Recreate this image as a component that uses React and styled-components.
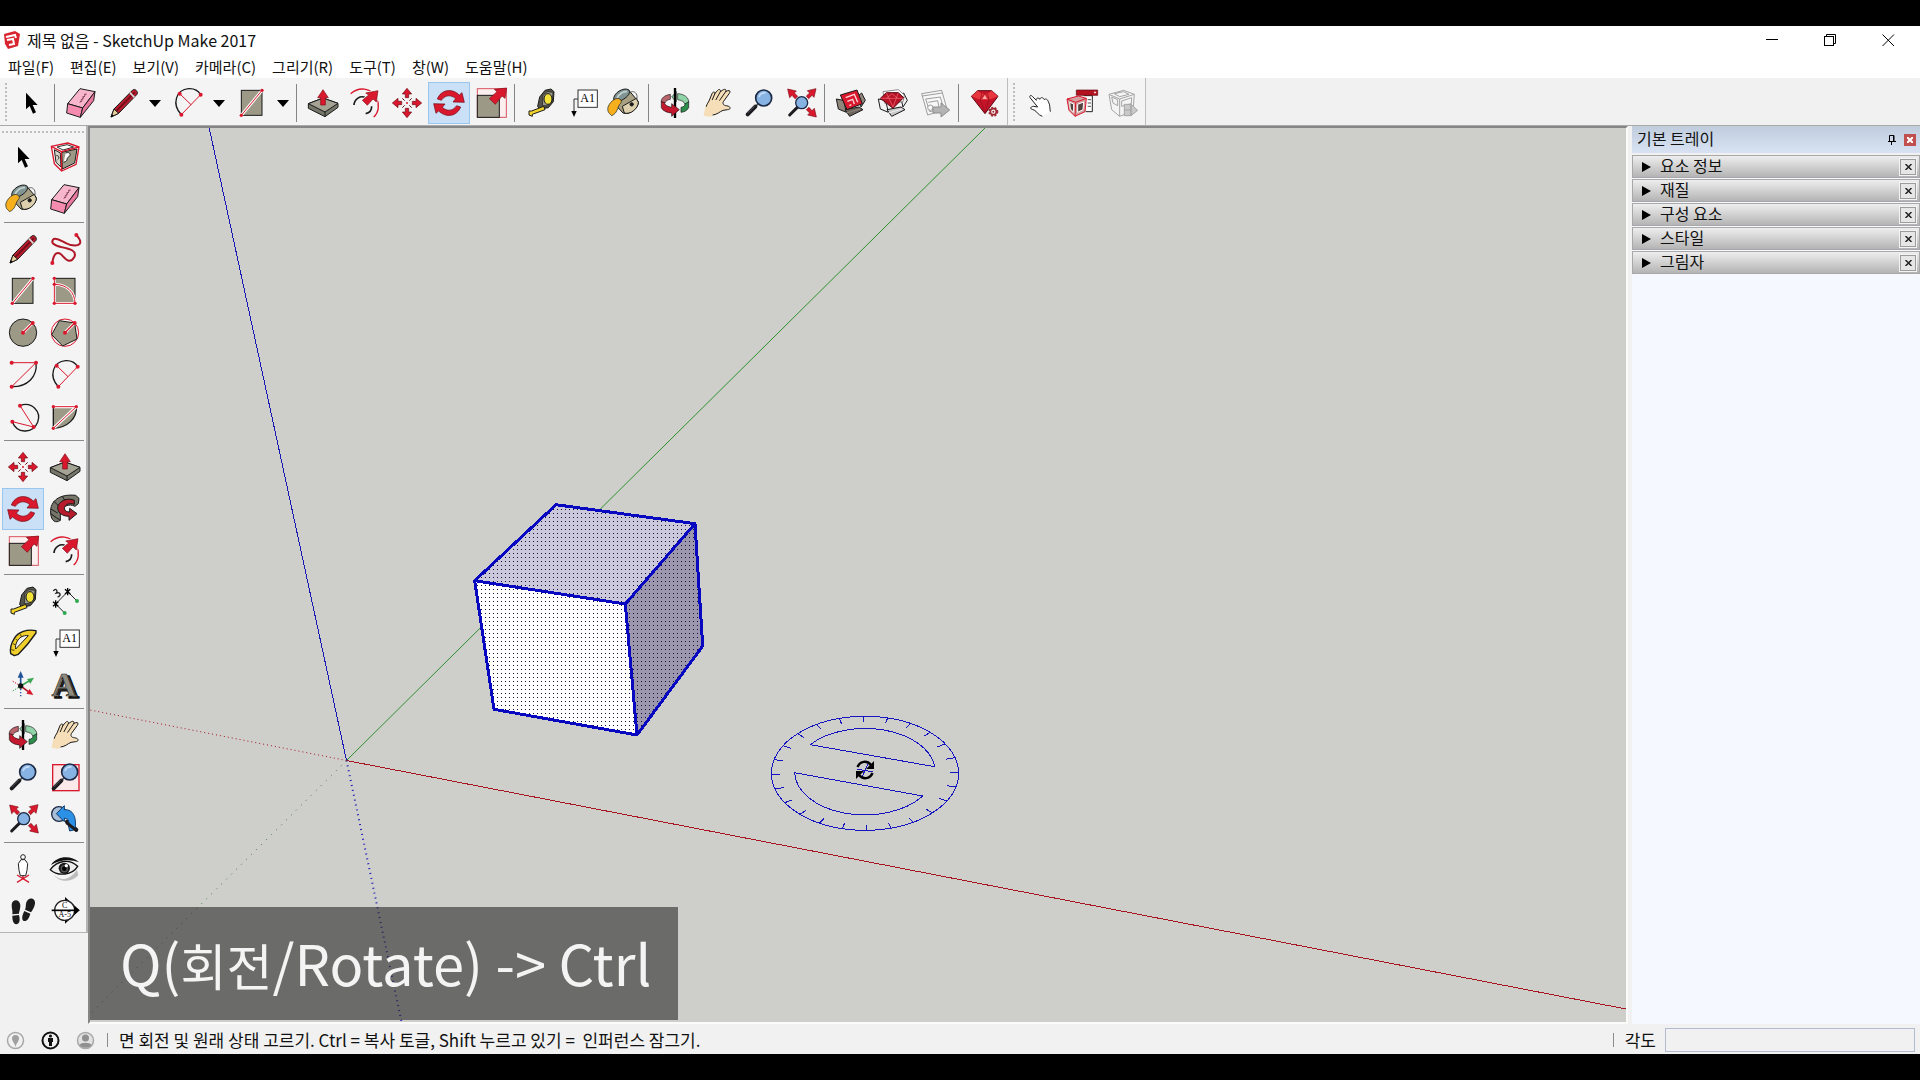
import React from "react";
import styled, { createGlobalStyle } from "styled-components";

const UI_FONT = '"Noto Sans CJK KR", "Noto Sans", sans-serif';
const RED = "#d9182d";
const KHAKI = "#9c9a86";
const INK = "#1a1a1a";

const GlobalStyle = createGlobalStyle`
  *, *::before, *::after { box-sizing: border-box; }
  body { margin: 0; background: #000; }
  button, input { font: inherit; color: inherit; }
`;

const Frame = styled.div`
  min-height: 100vh;
  display: flex;
  flex-direction: column;
  padding: 26px 0;
  background: #000;
  color: #111;
  font-family: ${UI_FONT};
  font-size: 15px;
  line-height: 20px;
`;

const TitleBar = styled.header`
  display: flex;
  align-items: center;
  height: 28px;
  padding: 0 3px 0 3px;
  gap: 6px;
  background: #fff;
`;

const Title = styled.h1`
  flex: 1;
  margin: 0;
  padding-bottom: 1px;
  font-size: 16px;
  line-height: 20px;
  font-weight: 400;
`;

const Logo = styled.svg`
  width: 18px;
  height: 20px;
`;

const WindowControls = styled.div`
  display: flex;
`;

const WindowButton = styled.button`
  display: flex;
  align-items: center;
  justify-content: center;
  width: 58px;
  height: 28px;
  padding: 0;
  border: 0;
  background: none;
`;

const MenuBar = styled.nav`
  display: flex;
  height: 24px;
  background: #fff;
`;

const MenuButton = styled.button`
  padding: 2px 8px 0;
  border: 0;
  background: none;
  line-height: 20px;
  white-space: nowrap;
`;

const ToolStrip = styled.div`
  display: flex;
  height: 48px;
  background: #f1f1f1;
  border-bottom: 1px solid #a9a9a9;
`;

const ToolGroup = styled.div`
  display: flex;
  align-items: center;
  padding: 3px 1px 0 5px;
  background: #f4f4f4;
  border-right: 1px solid #bdbdbd;
`;

const Grip = styled.span`
  width: ${(p) => (p.$wide ? "auto" : "2px")};
  height: ${(p) => (p.$wide ? "2px" : "40px")};
  margin: ${(p) => (p.$wide ? "5px 2px 3px" : "0 3px 0 0")};
  background: repeating-linear-gradient(
    ${(p) => (p.$wide ? "to right" : "to bottom")},
    #bdbdbd 0 2px,
    transparent 2px 4px
  );
`;

const ToolButton = styled.button`
  display: flex;
  align-items: center;
  justify-content: center;
  width: ${(p) => (p.$split ? "44px" : "42px")};
  height: 42px;
  padding: 0;
  border: 1px solid ${(p) => (p.$active ? "#98c6f0" : "transparent")};
  background: ${(p) => (p.$active ? "#c9e0f7" : "transparent")};
`;

const DropButton = styled.button`
  display: flex;
  align-items: center;
  justify-content: center;
  width: 20px;
  height: 42px;
  padding: 0 2px 0 0;
  border: 0;
  background: none;
`;

const StripRule = styled.span`
  width: 1px;
  height: 38px;
  margin: 0 5px 0 2px;
  background: #858585;
`;

const Glyph = styled.svg`
  width: 32px;
  height: 32px;
  overflow: visible;
  flex: none;
`;

const Workspace = styled.div`
  flex: 1;
  display: flex;
  background: #f1f1f1;
`;

const SidePalette = styled.aside`
  display: flex;
  flex-direction: column;
  align-self: flex-start;
  width: 88px;
  background: #f4f4f4;
  border-right: 2px solid #b4b4b4;
  border-bottom: 1px solid #b4b4b4;
`;

const PaletteBlock = styled.div`
  display: grid;
  grid-template-columns: 42px 42px;
  padding-left: 2px;
`;

const PaletteRule = styled.span`
  height: 1px;
  margin: 2px 2px 5px 4px;
  background: #8a8a8a;
`;

const Canvas = styled.main`
  flex: 1;
  position: relative;
  overflow: hidden;
  background: #cececa;
  border: 2px solid #858585;
  border-right-color: #fbfbfb;
  border-bottom-color: #fbfbfb;
`;

const Scene = styled.svg`
  position: absolute;
  inset: 0;
  width: 100%;
  height: 100%;
`;

const Caption = styled.p`
  position: absolute;
  left: 0;
  bottom: 2px;
  margin: 0;
  padding: 0 30px;
  width: 588px;
  height: 113px;
  background: rgba(42, 42, 42, 0.6);
  color: #f4f4f4;
  font-size: 56px;
  line-height: 110px;
  white-space: nowrap;
`;

const CaptionHangul = styled.span`
  font-size: 50px;
`;

const Tray = styled.aside`
  width: 292px;
  display: flex;
  flex-direction: column;
  padding-left: 4px;
  font-size: 16px;
`;

const TrayHeader = styled.header`
  display: flex;
  align-items: center;
  height: 27px;
  margin-bottom: 2px;
  padding: 0 4px 0 5px;
  gap: 6px;
  background: linear-gradient(#c0cddd, #d8e2f3);
`;

const TrayTitle = styled.h2`
  flex: 1;
  margin: 0;
  padding-bottom: 3px;
  font-size: 16px;
  line-height: 20px;
  font-weight: 400;
`;

const HeaderButton = styled.button`
  display: flex;
  align-items: center;
  justify-content: center;
  width: 12px;
  height: 12px;
  padding: 0;
  border: 0;
  background: ${(p) => (p.$danger ? "#c0504f" : "none")};
`;

const TrayBody = styled.div`
  flex: 1;
  display: flex;
  flex-direction: column;
  gap: 1px;
  background: #f5f8ff;
`;

const Section = styled.section`
  display: flex;
  align-items: center;
  height: 23px;
  padding: 0 3px 0 0;
  border: 1px solid #a8a8a8;
  background: linear-gradient(#eeeeee, #b4b4b4);
`;

const SectionToggle = styled.button`
  flex: 1;
  display: flex;
  align-items: center;
  gap: 9px;
  height: 21px;
  padding: 0 0 0 9px;
  border: 0;
  background: none;
  text-align: left;
`;

const SectionName = styled.span`
  padding-bottom: 3px;
`;

const SectionClose = styled.button`
  display: flex;
  align-items: center;
  justify-content: center;
  width: 16px;
  height: 16px;
  padding: 0;
  border: 1px solid #9c9c9c;
  outline: 1px solid #f4f4f4;
  background: #e6e6e6;
`;

const StatusBar = styled.footer`
  display: flex;
  align-items: center;
  height: 30px;
  padding: 2px 5px 0 6px;
  background: #f1f1f1;
  font-size: 17px;
`;

const StatusButtons = styled.div`
  display: flex;
  gap: 16px;
`;

const StatusButton = styled.button`
  display: flex;
  width: 19px;
  height: 19px;
  padding: 0;
  border: 0;
  background: none;
`;

const StatusRule = styled.span`
  width: 1px;
  height: 14px;
  margin: 0 11px 0 12px;
  background: #8c8c8c;
`;

const StatusText = styled.p`
  flex: 1;
  margin: 0;
  white-space: pre;
`;

const MeasureLabel = styled.label`
  padding-right: 9px;
`;

const MeasureInput = styled.input`
  width: 250px;
  height: 24px;
  padding: 0 4px;
  border: 1px solid #b2bad0;
  border-radius: 0;
  background: #f1f1f1;
`;

/* ---------- tool glyphs, drawn on a 96 unit grid ---------- */

const dots = (points, r = 6) =>
  points.map(([x, y]) => <circle key={`${x}-${y}`} cx={x} cy={y} r={r} fill={RED} />);

const moveArm = "M48 4 L62 21 H53 V32 H43 V21 H34 Z";

const lensHandle = (
  <>
    <path d="M46 50 L36 60" stroke="#555" strokeWidth="5" />
    <path d="M37 59 L14 82" stroke="#1c1c20" strokeWidth="12" strokeLinecap="round" />
    <path d="M35 57 L15 77" stroke="#55555c" strokeWidth="3" strokeLinecap="round" />
  </>
);

const lens = (
  <>
    {lensHandle}
    <circle cx="62" cy="33" r="24" fill="#86b2e4" stroke="#1d2a44" strokeWidth="5" />
    <path d="M48 30 C50 20 60 16 68 18" stroke="#c4dcf6" strokeWidth="5" fill="none" />
  </>
);

const slab = (
  <g stroke={INK} strokeWidth="3" strokeLinejoin="round">
    <path d="M4 50 L48 33 L93 49 V61 L54 89 L4 64 Z" fill="#77766a" />
    <path d="M4 50 L48 33 L93 49 L54 75 Z" fill="#a5a393" />
    <path d="M54 75 V89" />
  </g>
);

const bigArrow = (
  <path
    d="M95 3 L90 34 L81 27 L61 52 L43 35 L66 14 L58 7 Z"
    fill={RED}
    stroke="#7c0c16"
    strokeWidth="2"
  />
);

const box = (flap, body) => (
  <g stroke={INK} strokeWidth="3" strokeLinejoin="round">
    <path d="M4 36 L26 40 L34 76 L10 66 Z" fill={flap} />
    <path d="M70 26 L80 18 L91 40 L78 60 Z" fill={flap} />
    <path d="M30 68 L72 60 L84 68 L44 88 Z" fill={body} />
    <path d="M34 78 L76 66" fill="none" stroke={flap} />
  </g>
);

const GLYPHS = {
  select: <path d="M33 17 V67 L44 57 L54 80 L63 76 L53 54 H68 Z" fill="#000" />,
  eraser: (
    <g stroke={INK} strokeWidth="3" strokeLinejoin="round">
      <path d="M45 5 L90 14 L53 63 L8 50 Z" fill="#f7b6cb" />
      <path d="M8 50 L53 63 L46 91 L5 78 Z" fill="#f58bae" />
      <path d="M90 14 L86 41 L46 91 L53 63 Z" fill="#e9799f" />
      <path d="M44 46 L52 42 M48 38 L56 35 M52 30 L60 28 M57 22 L65 21 M46 44 L62 22" stroke="#8b4a60" strokeWidth="3" />
    </g>
  ),
  pencil: (
    <g strokeLinejoin="round">
      <path d="M9 90 L18 66 L74 9 C80 3 92 14 87 22 L32 79 Z" fill="#b71c2c" stroke={INK} strokeWidth="3" />
      <path d="M25 72 L80 16" stroke="#6d0d18" strokeWidth="5" />
      <path d="M9 90 L18 66 L32 79 Z" fill="#e8cf9c" stroke={INK} strokeWidth="3" />
      <path d="M9 90 L12 81 L17 86 Z" fill="#000" />
      <path d="M66 17 L79 31" stroke="#d8d8d8" strokeWidth="5" />
    </g>
  ),
  arc2: (
    <g fill="none">
      <path d="M28 83 C-2 52 12 8 50 5 C66 4 78 10 86 23" stroke={INK} strokeWidth="4" />
      <path d="M28 83 L86 23 M23 20 L57 53" stroke={RED} strokeWidth="3" />
      {dots([[28, 83], [86, 23], [23, 20]])}
    </g>
  ),
  rectangle: (
    <g>
      <rect x="16" y="10" width="62" height="75" fill={KHAKI} stroke={INK} strokeWidth="3" />
      <path d="M16 85 L78 10" stroke="#fff" strokeWidth="9" />
      <path d="M16 85 L78 10" stroke={RED} strokeWidth="3" />
      {dots([[16, 85], [78, 10]], 5)}
    </g>
  ),
  pushpull: (
    <g>
      {slab}
      <path d="M48 8 L64 32 H55 V54 H41 V32 H32 Z" fill={RED} stroke="#7c0c16" strokeWidth="2" />
    </g>
  ),
  offset: (
    <g fill="none">
      <path d="M5 20 C30 -2 66 2 82 32 C92 52 90 76 74 90" stroke={RED} strokeWidth="4" />
      <path d="M15 54 C16 36 34 24 50 32 M68 58 C68 70 64 78 50 80" stroke={INK} strokeWidth="5" />
      <path d="M87 11 L82 45 L72 36 L55 55 L40 40 L59 24 L50 18 Z" fill={RED} stroke="#fff" strokeWidth="6" />
      <path d="M87 11 L82 45 L72 36 L55 55 L40 40 L59 24 L50 18 Z" fill={RED} stroke="#7c0c16" strokeWidth="2" />
    </g>
  ),
  move: (
    <g fill={RED} stroke="#6d0a14" strokeWidth="2">
      {[0, 90, 180, 270].map((a) => (
        <path key={a} d={moveArm} transform={`rotate(${a} 48 48)`} />
      ))}
      <circle cx="48" cy="48" r="3" stroke="none" />
      <path d="M34 34 L41 41 M62 34 L55 41 M34 62 L41 55 M62 62 L55 55" strokeWidth="3" />
    </g>
  ),
  rotate: (
    <g fill={RED} stroke="#6d0a14" strokeWidth="2" strokeLinejoin="round">
      {[0, 180].map((a) => (
        <path
          key={a}
          d="M13 36 C24 8 56 2 79 24 L87 17 L94 46 L60 45 L68 35 C54 22 36 24 25 40 Z"
          transform={`rotate(${a} 48 48)`}
        />
      ))}
    </g>
  ),
  scale: (
    <g>
      <rect x="7" y="5" width="87" height="86" fill="#fbeff0" stroke="#d8545f" strokeWidth="3" />
      <rect x="7" y="25" width="66" height="66" fill={KHAKI} stroke={INK} strokeWidth="3" />
      {bigArrow}
    </g>
  ),
  tape: (
    <g stroke={INK} strokeWidth="3" strokeLinejoin="round">
      <path d="M44 30 L60 10 L78 6 L87 14 L85 44 L70 62 L44 66 L38 58 Z" fill="#55544c" />
      <path d="M54 26 L66 14 L84 16 L82 42 L68 56 L52 56 Z" fill="#9a988a" strokeWidth="2" />
      <ellipse cx="69" cy="36" rx="12" ry="16" fill="#f2e23a" />
      <path d="M56 58 L20 72 L12 72 V84 L22 88 L22 82 L60 68 Z" fill="#f2d32a" />
    </g>
  ),
  text: (
    <g>
      <rect x="33" y="9" width="58" height="52" fill="#fff" stroke="#333" strokeWidth="3" />
      <path d="M33 36 H21 V74" stroke="#333" strokeWidth="3" fill="none" />
      <path d="M13 72 H29 L21 90 Z" fill="#000" />
      <text x="62" y="46" fontFamily="Liberation Serif, serif" fontSize="36" textAnchor="middle">A1</text>
    </g>
  ),
  bucket: (
    <g stroke={INK} strokeWidth="3" strokeLinejoin="round">
      <path d="M60 22 C66 6 92 14 82 42" fill="none" stroke="#666" />
      <path d="M20 26 L58 8 L88 44 C90 62 62 86 42 78 L16 50 Z" fill="#a8a083" />
      <path d="M46 78 L40 58 L82 34 L88 46 C88 64 64 84 46 78 Z" fill="#ddd0ac" />
      <path d="M14 38 C12 18 44 0 58 8 C70 18 50 38 18 48 Z" fill="#7f9493" />
      <path d="M24 34 C30 20 44 12 54 14" stroke="#c4d2d0" fill="none" strokeWidth="5" />
      <path d="M18 36 C32 30 44 42 32 52 C24 64 26 78 8 86 C2 80 -6 76 -3 60 C2 48 8 42 18 36 Z" fill="#f6b01e" strokeWidth="2" />
      <circle cx="68" cy="52" r="5" fill={INK} />
    </g>
  ),
  orbit: (
    <g stroke={INK} strokeWidth="2" strokeLinejoin="round">
      <path d="M34 22 C16 25 5 34 7 46 L18 48 C20 42 26 38 34 37 Z" fill="#b9646b" />
      <path d="M56 20 C76 21 90 32 89 46 L78 52 C76 44 68 40 56 38 Z" fill="#8fd3a6" />
      <path d="M89 44 V62 C84 71 76 75 66 76 V61 C73 60 78 57 78 51 Z" fill="#2d8d4c" />
      <path d="M52 14 V44 L38 30 Z" fill="#8fd3a6" />
      <path d="M48 3 V93" stroke="#000" strokeWidth="7" />
      <path d="M7 44 V62 C12 72 24 77 38 78 V88 L61 68 L38 50 V61 C26 59 17 54 16 46 Z" fill="#c4182e" />
    </g>
  ),
  hand: (
    <g strokeLinejoin="round" strokeLinecap="round">
      <path
        d="M8 86 C11 66 14 54 24 42 L33 20 C35 14 42 13 42 19 L50 10 C54 5 60 8 58 14 L67 8 C73 5 77 9 74 14 L80 11 C87 9 89 14 85 19 L67 44 C64 50 68 56 76 56 L83 58 C90 61 88 68 80 68 L66 70 C56 74 50 82 36 84 L28 90 Z"
        fill="#f6dfb8"
      />
      <path
        d="M16 58 C18 50 22 46 24 42 L33 20 C35 14 42 13 42 19 L50 10 C54 5 60 8 58 14 L67 8 C73 5 77 9 74 14 L80 11 C87 9 89 14 85 19 L67 44 C64 50 68 56 76 56 L83 58 C90 61 88 68 80 68 L66 70 C56 74 50 82 36 84"
        fill="none"
        stroke={INK}
        strokeWidth="3"
      />
      <path d="M42 19 L34 38 M58 14 L45 38 M74 14 L56 40" stroke={INK} strokeWidth="3" />
    </g>
  ),
  zoom: lens,
  zoomExtents: (
    <g>
      <path d="M40 58 L14 84" stroke="#1c1c20" strokeWidth="9" strokeLinecap="round" />
      <circle cx="50" cy="47" r="18" fill="#86b2e4" stroke="#1d2a44" strokeWidth="4" />
      {[0, 90, 180].map((a) => (
        <path
          key={a}
          d="M8 6 L34 12 L28 18 L38 28 L30 35 L21 25 L14 32 Z"
          transform={`rotate(${a} 51 48)`}
          fill={RED}
          stroke="#7c0c16"
          strokeWidth="2"
        />
      ))}
    </g>
  ),
  warehouse: (
    <g>
      {box("#8f867c", "#6d655c")}
      <path d="M16 24 L66 9 L82 50 L36 68 Z" fill={RED} stroke={INK} strokeWidth="3" />
      <path d="M32 32 L58 22 L68 46 M37 43 L53 37 L58 51 M43 56 L49 53" fill="none" stroke="#fbd9dc" strokeWidth="4" />
    </g>
  ),
  extWarehouse: (
    <g>
      {box("#f2f2f2", "#c9c9c9")}
      <path d="M18 14 L64 8 L82 24 L78 44 L24 50 Z" fill="#fff" stroke="#555" strokeWidth="2" />
      <path d="M10 34 L28 17 H64 L80 32 L48 64 Z" fill="#b81428" stroke="#5c0811" strokeWidth="3" />
      <path d="M10 34 H80 M28 17 L48 60 L64 17 M28 34 L45 20 L62 34" stroke="#f06a72" strokeWidth="2" fill="none" />
    </g>
  ),
  share: (
    <g fill="#f7f7f7" stroke="#9d9d9d" strokeWidth="3">
      <path d="M8 20 L68 10 L84 66 L26 84 Z" />
      <path d="M10 27 L70 18 M20 36 L64 30 L74 64 L32 74 Z M28 46 L56 41 M56 41 L60 62" />
      <circle cx="34" cy="62" r="8" />
      <path d="M42 60 H66 V48 L92 69 L66 90 V78 H42 Z" fill="#b4b4b4" stroke="#8d8d8d" />
    </g>
  ),
  extManager: (
    <g>
      <path d="M7 28 L26 11 H68 L87 28 L48 80 Z" fill="#c5142a" stroke="#5c0811" strokeWidth="3" />
      <path d="M7 28 L34 38 H60 L87 28 L68 11 L56 20 H38 L26 11 Z" fill="#e8363f" />
      <path d="M34 38 L48 78 L60 38 M38 20 L34 38 M56 20 L60 38 M34 38 L48 18 L60 38" stroke="#8e0f1c" strokeWidth="2" fill="none" />
      <path d="M40 36 L48 24 L54 36 Z" fill="#f9a9a6" />
      <circle cx="73" cy="74" r="11" fill="#f4f4f4" stroke="#a02a34" strokeWidth="8" strokeDasharray="5 4" />
      <circle cx="73" cy="74" r="9" fill="#f4f4f4" stroke="#a02a34" strokeWidth="5" />
      <circle cx="73" cy="74" r="3" fill="#a02a34" />
    </g>
  ),
  pointHand: (
    <path
      d="M82 74 C80 64 82 54 76 44 C74 36 66 34 64 38 C60 30 52 30 51 37 C46 30 38 34 40 40 L28 28 C22 22 18 28 22 33 L44 60 L32 58 C22 58 20 66 28 67 C40 69 44 84 58 88"
      fill="#fff"
      stroke="#222"
      strokeWidth="3"
      strokeLinejoin="round"
    />
  ),
  compOptions: (
    <g strokeLinejoin="round">
      <path d="M56 26 H82 V74 H62" fill="#fff" stroke="#222" strokeWidth="3" />
      <path d="M68 38 H78 M68 48 H78 M68 58 H78" stroke="#555" strokeWidth="3" />
      <rect x="34" y="9" width="64" height="16" fill="#b5121f" stroke="#5c0811" strokeWidth="2" />
      <path d="M86 14 L90 20 L94 14 Z" fill="#fff" />
      <path d="M6 36 L40 27 L64 34 L60 74 L30 88 L12 70 Z" fill="#d5a0a0" stroke={RED} strokeWidth="3" />
      <path d="M6 36 L32 46 L64 34 M32 46 L30 88" stroke={RED} strokeWidth="3" fill="none" />
      <path d="M14 46 L26 51 V76 L16 66 Z M38 52 L56 45 L54 68 L38 76 Z" fill="#54423f" stroke="#fff" strokeWidth="3" />
    </g>
  ),
  compAttrs: (
    <g fill="#f4f4f4" stroke="#a5a5a5" strokeWidth="3" strokeLinejoin="round">
      <path d="M6 22 L50 10 L82 22 L78 72 L38 88 L14 68 Z" />
      <path d="M6 22 L38 36 L82 22 M38 36 V88 M14 30 L32 38 V56 L18 48 Z M44 42 L74 32 L73 50 L44 58 Z M22 20 L50 14 L66 22 L38 29 Z" />
      <path d="M52 52 H72 V86 H52 Z M72 52 L92 70 L72 86 Z" fill="#c9c9c9" />
      <path d="M52 69 H72" />
    </g>
  ),
  component: (
    <g strokeLinejoin="round">
      <path d="M7 16 L56 6 L90 18 L81 70 L38 90 L16 68 Z" fill="#fff" stroke={RED} strokeWidth="4" />
      <path d="M38 34 L84 24 L77 66 L40 84 Z" fill={KHAKI} stroke={INK} strokeWidth="3" />
      <path d="M16 26 L34 36 L36 78 L21 64 Z" fill="#d6d4c8" stroke={INK} strokeWidth="3" />
      <path d="M50 36 C66 30 66 46 58 48 C50 54 60 58 44 64" fill="#fff" stroke="#222" strokeWidth="3" />
      <path d="M22 44 C30 42 32 52 26 56" fill="none" stroke="#222" strokeWidth="3" />
      <path d="M24 18 L54 11 L74 18 L42 27 Z" fill="#fff" stroke="#333" strokeWidth="3" />
      <path d="M7 16 L37 32 L90 18 M37 32 L38 90" fill="none" stroke={RED} strokeWidth="4" />
    </g>
  ),
  freehand: (
    <g fill="none">
      <path
        d="M82 6 C106 32 90 42 62 35 C40 27 26 12 14 18 C4 28 12 36 36 42 C66 48 84 54 76 72 C66 90 54 84 42 70 C28 52 14 58 10 90"
        stroke="#b01828"
        strokeWidth="6"
      />
      {dots([[82, 6], [10, 90]])}
    </g>
  ),
  rotatedRect: (
    <g>
      <rect x="16" y="10" width="62" height="75" fill={KHAKI} stroke={INK} strokeWidth="3" />
      <path d="M16 10 V85 H78 C78 52 54 28 16 28" stroke="#fff" strokeWidth="8" fill="none" />
      <path d="M16 10 V85 H78 C78 52 54 28 16 28" stroke={RED} strokeWidth="3" fill="none" />
      {dots([[16, 10], [16, 28], [16, 85], [78, 85]], 5)}
    </g>
  ),
  circle: (
    <g>
      <circle cx="48" cy="47" r="41" fill={KHAKI} stroke={INK} strokeWidth="3" />
      <path d="M48 47 L77 18" stroke="#fff" strokeWidth="9" />
      <path d="M48 47 L77 18" stroke={RED} strokeWidth="4" />
      {dots([[48, 47], [77, 18]])}
    </g>
  ),
  polygon: (
    <g>
      <circle cx="48" cy="47" r="41" fill="#fdf3f3" stroke={RED} strokeWidth="3" />
      <path d="M77 18 L84 66 L41 87 L8 53 L31 11 Z" fill={KHAKI} stroke={INK} strokeWidth="3" />
      <path d="M48 47 L77 18" stroke="#fff" strokeWidth="9" />
      <path d="M48 47 L77 18" stroke={RED} strokeWidth="4" />
      {dots([[48, 47], [77, 18]])}
    </g>
  ),
  arc: (
    <g fill="none">
      <path d="M87 11 C92 52 62 84 14 83" stroke={INK} strokeWidth="4" />
      <path d="M14 11 H87 L14 83" stroke={RED} strokeWidth="3" />
      {dots([[14, 11], [87, 11], [14, 83]])}
    </g>
  ),
  arc3: (
    <g fill="none">
      <path d="M39 14 C74 0 104 32 92 64 C76 102 28 96 16 62" stroke={INK} strokeWidth="4" />
      <path d="M39 14 L80 78 L16 62" stroke={RED} strokeWidth="3" />
      {dots([[39, 14], [80, 78], [16, 62]])}
    </g>
  ),
  pie: (
    <g>
      <path d="M13 17 H82 C84 52 56 80 13 82 Z" fill={KHAKI} stroke={INK} strokeWidth="4" />
      <path d="M13 17 H82 L13 82" stroke="#fff" strokeWidth="9" fill="none" />
      <path d="M13 17 H82 L13 82" stroke={RED} strokeWidth="3" fill="none" />
      {dots([[13, 17], [82, 17], [13, 82]], 5)}
    </g>
  ),
  followMe: (
    <g stroke={INK} strokeWidth="3" strokeLinejoin="round">
      <path d="M5 60 C2 22 34 2 80 7 L90 16 L88 32 L78 40 C60 30 38 40 34 60 L34 82 C20 92 6 84 5 60 Z" fill="#77766a" />
      <path d="M5 48 L26 60 M14 24 L32 42 M40 10 L50 26 M5 62 L22 74 L34 82" />
      <path d="M27 38 C36 20 58 14 76 22 L76 34 C60 28 46 36 46 48 C48 54 54 57 62 57 L62 46 L84 62 L60 82 L60 70 C38 70 22 56 27 38 Z" fill="#b71c2c" />
    </g>
  ),
  dimension: (
    <g>
      <path d="M20 57 L56 20 M20 57 L46 83 M56 20 L83 47" stroke="#222" strokeWidth="3" />
      <path d="M12 50 L28 64 M20 46 V68 M28 50 L12 64 M48 13 L64 27 M56 9 V31 M64 13 L48 27" stroke="#000" strokeWidth="4" />
      <circle cx="47" cy="84" r="6" fill="#2fa84f" />
      <circle cx="84" cy="48" r="6" fill="#2fa84f" />
      <path d="M13 18 C18 8 28 16 22 24 C34 20 38 32 26 36" fill="none" stroke="#222" strokeWidth="4" />
    </g>
  ),
  protractor: (
    <g strokeLinejoin="round">
      <path d="M87 11 C60 6 34 14 22 34 C12 50 8 66 11 80 L22 86 L34 82 C54 62 72 40 87 18 Z" fill="#f0cf2c" stroke={INK} strokeWidth="4" />
      <path d="M64 26 C48 24 36 32 30 44 C25 54 25 60 26 66 Z" fill="#f4f4f4" stroke={INK} strokeWidth="3" />
      <path d="M13 68 L22 70 M18 50 L26 54 M26 36 L33 42 M40 22 L44 30" stroke="#4a3e00" strokeWidth="3" />
    </g>
  ),
  axes: (
    <g>
      <path d="M41 51 V84" stroke="#23549a" strokeWidth="4" strokeDasharray="4 5" />
      <path d="M41 51 L16 36" stroke={RED} strokeWidth="3" strokeDasharray="4 4" />
      <path d="M41 51 L14 68" stroke="#3aa655" strokeWidth="3" strokeDasharray="4 4" />
      <path d="M41 51 V22" stroke="#23549a" strokeWidth="5" />
      <path d="M41 6 L50 26 H32 Z" fill="#23549a" />
      <path d="M41 51 L66 36" stroke="#3aa655" strokeWidth="5" />
      <path d="M81 26 L70 44 L60 30 Z" fill="#3aa655" />
      <path d="M41 51 L64 68" stroke="#b71c2c" strokeWidth="5" />
      <path d="M79 78 L58 74 L68 60 Z" fill={RED} />
      <circle cx="41" cy="51" r="8" fill="#111" />
    </g>
  ),
  text3d: (
    <g fontFamily="Liberation Serif, serif" fontWeight="700" fontSize="104" textAnchor="middle" strokeLinejoin="round">
      <text x="53" y="87" fill="#3f3e3a" stroke="#111" strokeWidth="4">A</text>
      <text x="45" y="82" fill="#8d8b80" stroke="#222" strokeWidth="2">A</text>
    </g>
  ),
  zoomWindow: (
    <g>
      <rect x="11" y="11" width="79" height="78" fill="#fbe9ea" stroke={RED} strokeWidth="4" />
      {lens}
    </g>
  ),
  previous: (
    <g strokeLinejoin="round">
      <circle cx="30" cy="33" r="22" fill="#a9bfd8" stroke="#1d2a44" strokeWidth="4" />
      <path d="M54 56 L82 80" stroke="#1c1c20" strokeWidth="12" strokeLinecap="round" />
      <path d="M22 32 L46 8 V20 C72 18 84 42 78 80 L62 84 L58 66 C62 54 58 46 46 46 V56 Z" fill="#2b90e6" stroke="#123f70" strokeWidth="3" />
      <path d="M54 60 L82 82" stroke="#1c1c20" strokeWidth="9" strokeLinecap="round" />
    </g>
  ),
  positionCamera: (
    <g>
      <path d="M30 88 L66 66 M30 66 L66 88 M48 66 V80" stroke={RED} strokeWidth="4" />
      <circle cx="48" cy="12" r="7" fill="#fff" stroke="#222" strokeWidth="3" />
      <path d="M42 20 H54 L62 32 L60 52 L56 68 H40 L36 52 L34 32 Z" fill="#fff" stroke="#222" strokeWidth="3" />
    </g>
  ),
  lookAround: (
    <g>
      <path d="M14 66 C36 86 62 82 84 50 L88 66 C72 86 34 92 14 66 Z" fill="#bdbdbd" />
      <path d="M4 50 C24 22 62 16 86 40 C70 66 28 72 4 50 Z" fill="#eee" stroke="#111" strokeWidth="4" />
      <path d="M6 36 C24 8 66 6 90 28 C66 18 30 20 6 36 Z" fill="#111" />
      <circle cx="46" cy="46" r="17" fill="#1a1a1a" />
      <circle cx="46" cy="47" r="11" fill="#555" />
      <circle cx="46" cy="47" r="7" fill="#000" />
      <circle cx="52" cy="38" r="5" fill="#fff" />
    </g>
  ),
  walk: (
    <g fill="#1c1c1c">
      <path d="M14 30 C14 12 38 10 40 30 C40 44 36 50 36 56 L16 58 C18 48 14 42 14 30 Z" />
      <path d="M16 62 L36 60 C40 76 38 86 28 88 C18 86 16 76 16 62 Z" />
      <path d="M58 22 C64 4 86 8 84 26 C82 38 76 46 72 52 L54 44 C58 36 55 32 58 22 Z" />
      <path d="M52 48 L70 56 C66 70 60 80 50 78 C42 72 46 60 52 48 Z" />
    </g>
  ),
  section: (
    <g>
      <path d="M48 6 L92 46 L48 86 V72 L74 46 L48 20 Z" fill="#000" />
      <circle cx="47" cy="46" r="30" fill="#fff" stroke="#222" strokeWidth="4" />
      <path d="M8 46 H84" stroke="#000" strokeWidth="5" />
      <path d="M76 36 L92 46 L76 56 Z" fill="#000" />
      <g fontFamily="Liberation Serif, serif" fontSize="24" textAnchor="middle">
        <text x="47" y="40">C</text>
        <text x="47" y="66">A-5</text>
      </g>
    </g>
  ),
};

const Tool = ({ name, label, split, active }) => (
  <ToolButton type="button" aria-label={label} aria-pressed={active ? true : undefined} $split={split} $active={active}>
    <Glyph viewBox="0 0 96 96" aria-hidden="true">{GLYPHS[name]}</Glyph>
  </ToolButton>
);

const SplitTool = ({ name, label }) => (
  <>
    <Tool name={name} label={label} split />
    <DropButton type="button" aria-label={`${label} 목록`}>
      <svg width="12" height="8" viewBox="0 0 12 8" aria-hidden="true">
        <path d="M0 1 H12 L6 8 Z" fill="#000" />
      </svg>
    </DropButton>
  </>
);

const STRIP = [
  [["select", "선택"]],
  [["eraser", "지우개"], ["pencil", "선", true], ["arc2", "호", true], ["rectangle", "직사각형", true]],
  [["pushpull", "밀기/끌기"], ["offset", "오프셋"], ["move", "이동"], ["rotate", "회전"], ["scale", "배율"]],
  [["tape", "줄자"], ["text", "텍스트"], ["bucket", "페인트통"]],
  [["orbit", "궤도"], ["hand", "이동 보기"], ["zoom", "확대/축소"], ["zoomExtents", "범위 확대"]],
  [["warehouse", "3D Warehouse"], ["extWarehouse", "Extension Warehouse"], ["share", "공유"]],
  [["extManager", "확장 관리자"]],
];

const DYNAMIC = [["pointHand", "상호 작용"], ["compOptions", "구성 요소 옵션"], ["compAttrs", "구성 요소 속성"]];

const PALETTE = [
  [["select", "선택"], ["component", "구성 요소 만들기"], ["bucket", "페인트통"], ["eraser", "지우개"]],
  [
    ["pencil", "선"], ["freehand", "프리핸드"], ["rectangle", "직사각형"], ["rotatedRect", "회전된 직사각형"],
    ["circle", "원"], ["polygon", "다각형"], ["arc", "호"], ["arc2", "2점 호"], ["arc3", "3점 호"], ["pie", "파이"],
  ],
  [["move", "이동"], ["pushpull", "밀기/끌기"], ["rotate", "회전"], ["followMe", "따라가기"], ["scale", "배율"], ["offset", "오프셋"]],
  [["tape", "줄자"], ["dimension", "치수"], ["protractor", "각도기"], ["text", "텍스트"], ["axes", "축"], ["text3d", "3D 텍스트"]],
  [["orbit", "궤도"], ["hand", "이동 보기"], ["zoom", "확대/축소"], ["zoomWindow", "창 확대"], ["zoomExtents", "범위 확대"], ["previous", "이전"]],
  [["positionCamera", "카메라 배치"], ["lookAround", "둘러보기"], ["walk", "이동하기"], ["section", "단면"]],
];

const MENUS = ["파일(F)", "편집(E)", "보기(V)", "카메라(C)", "그리기(R)", "도구(T)", "창(W)", "도움말(H)"];
const SECTIONS = ["요소 정보", "재질", "구성 요소", "스타일", "그림자"];

const CUBE_OUTLINE = "M556 504.7 L695 523.7 L702.7 646 L637 735 L494 709.3 L474.7 580.7 Z";

/* one dotted row every four units marks the selected faces */
const STIPPLE_ROWS = Array.from({ length: 60 }, (_, i) => `M473 ${501.5 + i * 4} H705`).join(" ");

const TICKS = Array.from({ length: 24 }, (_, i) => {
  const a = ((i * 15 - 1) * Math.PI) / 180;
  const c = Math.cos(a);
  const s = Math.sin(a);
  return `M${865 + 93.7 * c} ${773.3 + 57 * s} L${865 + 84.7 * c} ${773.3 + 51.5 * s}`;
}).join(" ");

const Viewport = () => (
  <Scene viewBox="90 128 1536 894" preserveAspectRatio="xMinYMin slice" role="img" aria-label="모델">
    <defs>
      <clipPath id="cube">
        <path d={CUBE_OUTLINE} />
      </clipPath>
    </defs>
    <g strokeWidth="1" fill="none">
      <g shapeRendering="crispEdges">
        <path d="M346.5 760.5 L209 127" stroke="#1818b4" />
        <path d="M346.5 760.5 L1626 1009" stroke="#a81420" />
      </g>
      <path d="M346.5 760.5 L986 127" stroke="#2e922e" />
      <path d="M346.5 760.5 L402 1024" stroke="#1818b4" strokeDasharray="1 4" strokeWidth="2" />
      <path d="M346.5 760.5 L88 1016" stroke="#3c7a3c" strokeDasharray="1 6" />
      <path d="M346.5 760.5 L90 710" stroke="#a81420" strokeDasharray="1 3" />
    </g>
    <polygon points="556,504.7 695,523.7 625.3,604 474.7,580.7" fill="#cbc8dc" />
    <polygon points="474.7,580.7 625.3,604 637,735 494,709.3" fill="#ffffff" />
    <polygon points="625.3,604 695,523.7 702.7,646 637,735" fill="#9c97ae" />
    <path d={STIPPLE_ROWS} stroke="#101038" strokeDasharray="1 3" clipPath="url(#cube)" />
    <g fill="none" stroke="#0808c0" strokeWidth="3" strokeLinejoin="round" shapeRendering="crispEdges">
      <path d={CUBE_OUTLINE} />
      <path d="M474.7 580.7 L625.3 604 L695 523.7 M625.3 604 L637 735" />
    </g>
    <g fill="none" stroke="#1414c0" strokeWidth="1" shapeRendering="crispEdges">
      <ellipse cx="865" cy="773.3" rx="93.7" ry="57" />
      <path d={TICKS} />
      <path d="M810.3 744.7 A70 43 0 0 1 934.7 766.7 Z" />
      <path d="M794.7 772.7 A70 43 0 0 0 922.7 796 Z" />
      <path d="M857 769 L873 772 M868 764 L862 777" />
    </g>
    <g fill="none" stroke="#000" strokeWidth="2.5">
      <path d="M857.5 767 C860 761 867 760 871 765" />
      <path d="M872.5 773 C870 779 863 780 859 775" />
      <path d="M874 761 V769 H866 Z M856 779 V771 H864 Z" fill="#000" stroke="none" />
    </g>
  </Scene>
);

export default function App() {
  return (
    <>
      <GlobalStyle />
      <Frame>
        <TitleBar>
          <Logo viewBox="0 0 18 20" aria-hidden="true">
            <path d="M1 4 L12 1 L17 4 L15 16 L5 19 L2 14 Z" fill="#d9252f" />
            <path d="M3 7 L12 5 L13 8 M4 10 L10 9 L11 14 L6 15" stroke="#fff" strokeWidth="2" fill="none" />
          </Logo>
          <Title>제목 없음 - SketchUp Make 2017</Title>
          <WindowControls>
            <WindowButton type="button" aria-label="최소화">
              <svg width="13" height="13" aria-hidden="true"><path d="M0 5.5 H12" stroke="#000" /></svg>
            </WindowButton>
            <WindowButton type="button" aria-label="이전 크기로 복원">
              <svg width="13" height="13" fill="none" stroke="#000" aria-hidden="true">
                <rect x="0.5" y="2.5" width="9" height="9" />
                <path d="M2.5 2.5 V0.5 H11.5 V9.5 H9.5" />
              </svg>
            </WindowButton>
            <WindowButton type="button" aria-label="닫기">
              <svg width="13" height="13" stroke="#000" aria-hidden="true"><path d="M0.5 0.5 L12 12 M12 0.5 L0.5 12" /></svg>
            </WindowButton>
          </WindowControls>
        </TitleBar>
        <MenuBar>
          {MENUS.map((m) => <MenuButton key={m} type="button">{m}</MenuButton>)}
        </MenuBar>
        <ToolStrip>
          <ToolGroup>
            <Grip />
            {STRIP.map((block, i) => (
              <React.Fragment key={i}>
                {i > 0 && <StripRule />}
                {block.map(([name, label, split]) =>
                  split
                    ? <SplitTool key={name} name={name} label={label} />
                    : <Tool key={name} name={name} label={label} active={name === "rotate"} />
                )}
              </React.Fragment>
            ))}
          </ToolGroup>
          <ToolGroup>
            <Grip />
            {DYNAMIC.map(([name, label]) => <Tool key={name} name={name} label={label} />)}
          </ToolGroup>
        </ToolStrip>
        <Workspace>
          <SidePalette>
            <Grip $wide />
            {PALETTE.map((block, i) => (
              <React.Fragment key={i}>
                {i > 0 && <PaletteRule />}
                <PaletteBlock>
                  {block.map(([name, label]) => (
                    <Tool key={name} name={name} label={label} active={name === "rotate"} />
                  ))}
                </PaletteBlock>
              </React.Fragment>
            ))}
          </SidePalette>
          <Canvas>
            <Viewport />
            <Caption>Q(<CaptionHangul>회전</CaptionHangul>/Rotate) -&gt; Ctrl</Caption>
          </Canvas>
          <Tray>
            <TrayHeader>
              <TrayTitle>기본 트레이</TrayTitle>
              <HeaderButton type="button" aria-label="고정">
                <svg width="8" height="10" aria-hidden="true">
                  <path d="M1.5 6 V0.5 H6 V6 M5.5 0 V6 M0 6.5 H8 M3.5 6 V10" stroke="#000" fill="none" />
                </svg>
              </HeaderButton>
              <HeaderButton type="button" aria-label="트레이 닫기" $danger>
                <svg width="6" height="6" aria-hidden="true"><path d="M0 0 L6 6 M6 0 L0 6" stroke="#fff" strokeWidth="2" /></svg>
              </HeaderButton>
            </TrayHeader>
            <TrayBody>
              {SECTIONS.map((s) => (
                <Section key={s}>
                  <SectionToggle type="button" aria-expanded="false">
                    <svg width="9" height="10" aria-hidden="true"><path d="M0 0 L9 5 L0 10 Z" fill="#000" /></svg>
                    <SectionName>{s}</SectionName>
                  </SectionToggle>
                  <SectionClose type="button" aria-label={`${s} 닫기`}>
                    <svg width="7" height="6" aria-hidden="true"><path d="M0.5 0 L6.5 6 M6.5 0 L0.5 6" stroke="#222" strokeWidth="1.5" /></svg>
                  </SectionClose>
                </Section>
              ))}
            </TrayBody>
          </Tray>
        </Workspace>
        <StatusBar>
          <StatusButtons>
            <StatusButton type="button" aria-label="위치">
              <svg viewBox="0 0 19 19" aria-hidden="true">
                <circle cx="9.5" cy="9.5" r="8" fill="none" stroke="#a8a8a8" strokeWidth="1.5" />
                <path d="M9.5 16 C8.5 12 6 10 6 7.5 A3.5 3.5 0 0 1 13 7.5 C13 10 10.5 12 9.5 16 Z" fill="#a0a0a0" />
              </svg>
            </StatusButton>
            <StatusButton type="button" aria-label="크레딧">
              <svg viewBox="0 0 19 19" aria-hidden="true">
                <circle cx="9.5" cy="9.5" r="8" fill="none" stroke="#111" strokeWidth="2" />
                <circle cx="9.5" cy="5" r="1.6" fill="#111" />
                <path d="M7 7 H12 V11 H11 V15 H8 V11 H7 Z" fill="#111" />
              </svg>
            </StatusButton>
            <StatusButton type="button" aria-label="로그인">
              <svg viewBox="0 0 19 19" aria-hidden="true">
                <circle cx="9.5" cy="9.5" r="8" fill="#e2e2e2" stroke="#a8a8a8" strokeWidth="1.5" />
                <circle cx="9.5" cy="7" r="3.5" fill="#909090" />
                <path d="M3.5 14 C5 11 14 11 15.5 14 C13 17.5 6 17.5 3.5 14 Z" fill="#909090" />
              </svg>
            </StatusButton>
          </StatusButtons>
          <StatusRule />
          <StatusText>{"면 회전 및 원래 상태 고르기. Ctrl = 복사 토글, Shift 누르고 있기 =  인퍼런스 잠그기."}</StatusText>
          <StatusRule />
          <MeasureLabel htmlFor="measure">각도</MeasureLabel>
          <MeasureInput id="measure" type="text" />
        </StatusBar>
      </Frame>
    </>
  );
}
